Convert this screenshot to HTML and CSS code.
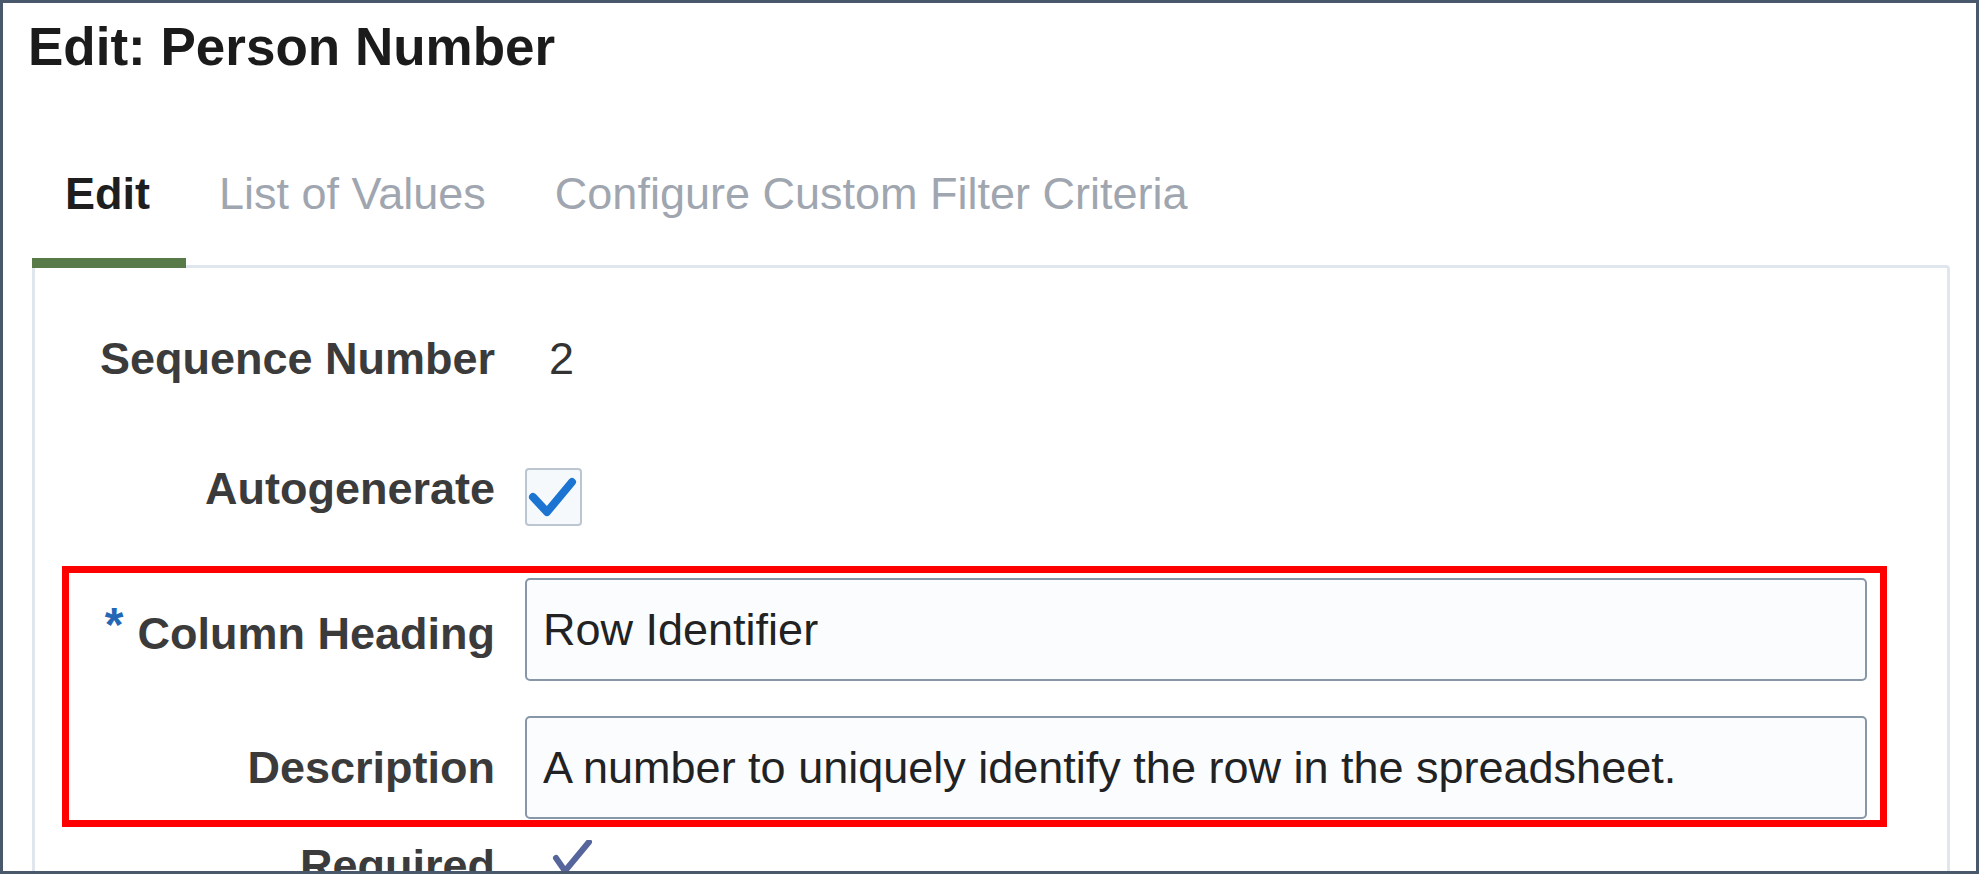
FILE: index.html
```html
<!DOCTYPE html>
<html lang="en">
<head>
<meta charset="utf-8">
<title>Edit: Person Number</title>
<link rel="stylesheet" href="styles.css">
</head>
<body>
<div class="frame">
  <h1 class="title">Edit: Person Number</h1>
  <div class="tabs">
    <div class="tab tab-active">Edit</div>
    <div class="tab">List of Values</div>
    <div class="tab">Configure Custom Filter Criteria</div>
  </div>
  <div class="panel">
    <div class="row row-seq">
      <div class="label">Sequence Number</div>
      <div class="field"><span class="value">2</span></div>
    </div>
    <div class="row row-auto">
      <div class="label">Autogenerate</div>
      <div class="field">
        <div class="checkbox">
          <svg width="53" height="54" viewBox="0 0 53 54"><polyline points="6,27 20,42 45,12" fill="none" stroke="#1b74d1" stroke-width="8" stroke-linecap="round" stroke-linejoin="round"/></svg>
        </div>
      </div>
    </div>
    <div class="highlight">
      <div class="row row-input">
        <div class="label"><span class="req">*</span>Column Heading</div>
        <div class="field"><div class="textbox">Row Identifier</div></div>
      </div>
      <div class="row row-input row-desc">
        <div class="label">Description</div>
        <div class="field"><div class="textbox">A number to uniquely identify the row in the spreadsheet.</div></div>
      </div>
    </div>
    <div class="row row-req">
      <div class="label">Required</div>
      <div class="field">
        <svg class="tick" width="40" height="40" viewBox="0 0 40 40"><polyline points="4,18 13,31 37,2" fill="none" stroke="#56659b" stroke-width="6" stroke-linecap="round" stroke-linejoin="round"/></svg>
      </div>
    </div>
  </div>
</div>
</body>
</html>
```
FILE: styles.css
```css
html, body {
  margin: 0;
  padding: 0;
  background: #ffffff;
}

body {
  font-family: "Liberation Sans", Arial, sans-serif;
}

.frame {
  width: 1979px;
  height: 874px;
  box-sizing: border-box;
  border: 3px solid #4a586b;
  background: #ffffff;
  overflow: hidden;
}

.title {
  margin: 14px 0 0 25px;
  font-size: 53px;
  line-height: 60px;
  font-weight: bold;
  color: #1b1b1b;
}

.tabs {
  display: flex;
  margin: 91px 0 0 29px;
  position: relative;
  z-index: 1;
}

.tab {
  font-size: 45px;
  line-height: 52px;
  padding: 0 36px 38px 33px;
  border-bottom: 10px solid transparent;
  color: #a0a6b0;
  white-space: nowrap;
}

.tab-active {
  font-weight: bold;
  color: #1e1e1e;
  border-bottom-color: #587a48;
}

.panel {
  margin: -3px 26px 0 29px;
  height: 900px;
  border: 3px solid #dfe6ee;
  border-radius: 4px 4px 0 0;
  padding: 65px 80px 0 34px;
}

.row {
  display: flex;
  align-items: flex-start;
  gap: 30px;
}

.label {
  width: 426px;
  flex: none;
  text-align: right;
  font-size: 45px;
  line-height: 52px;
  font-weight: bold;
  color: #3b3b3b;
  white-space: nowrap;
}

.field {
  flex: 1;
  min-width: 0;
}

.value {
  display: block;
  padding-left: 24px;
  font-size: 45px;
  line-height: 52px;
  color: #333333;
}

.row-auto {
  margin-top: 78px;
}

.checkbox {
  margin-top: 5px;
  width: 57px;
  height: 58px;
  box-sizing: border-box;
  border: 2px solid #bcc6d0;
  border-radius: 4px;
  background: #f6f9fc;
}

.checkbox svg {
  display: block;
}

.highlight {
  margin: 40px -20px 0 -7px;
  border: 7px solid #ff0000;
  padding: 5px 13px 1px 0;
}

.row-input {
  align-items: center;
}

.row-desc {
  margin-top: 35px;
}

.textbox {
  height: 103px;
  box-sizing: border-box;
  border: 2px solid #8797a7;
  border-radius: 5px;
  background: #fafcfe;
  padding-left: 16px;
  display: flex;
  align-items: center;
  font-size: 45px;
  color: #222222;
  white-space: nowrap;
}

.req {
  font-size: 48px;
  color: #2467b5;
  vertical-align: 8px;
  margin-right: 14px;
}

.row-req {
  margin-top: 13px;
}

.tick {
  display: block;
  margin-left: 27px;
}
```
